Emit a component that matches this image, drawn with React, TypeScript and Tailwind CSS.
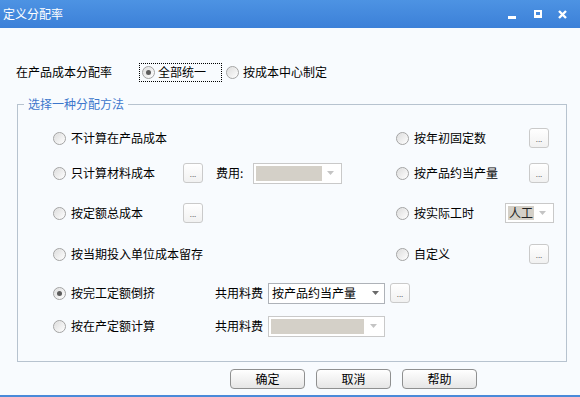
import React from "react";

const Radio = ({ checked }: { checked?: boolean }) => (
  <span className="flex h-[13px] w-[13px] shrink-0 items-center justify-center rounded-full border border-[#a3a3a3] bg-linear-to-br from-[#dcdcdc] to-white shadow-[inset_0_0_1px_#fff]">
    {checked && <span className="h-[5px] w-[5px] rounded-full bg-[#5c5c5c]" />}
  </span>
);

const Arrow = ({ light }: { light?: boolean }) => (
  <svg width="7" height="4" viewBox="0 0 7 4">
    <path d="M0 0H7L3.5 4Z" fill={light ? "#c4c4c4" : "#6a6a6a"} />
  </svg>
);

const Dots = () => (
  <span className="flex h-[20px] w-[20px] shrink-0 items-end justify-center rounded-[3px] border border-[#cacaca] bg-linear-to-b from-white to-[#f1f1f1] pb-[4px] text-[8px] leading-none text-[#666]">
    ...
  </span>
);

const Opt = ({ w, label, checked }: { w: string; label: string; checked?: boolean }) => (
  <span className={`flex shrink-0 items-center gap-[5px] ${w}`}>
    <Radio checked={checked} />
    <span>{label}</span>
  </span>
);

const DisabledSelect = ({ w, arrowW }: { w: string; arrowW: string }) => (
  <span className={`flex h-[21px] shrink-0 border border-[#c9c9c9] bg-white p-[2px] ${w}`}>
    <span className="flex-1 bg-[#d4d0c8]" />
    <span className={`flex items-center justify-center ${arrowW}`}>
      <Arrow light />
    </span>
  </span>
);

const Btn = ({ label }: { label: string }) => (
  <span className="flex h-[20px] w-[75px] items-center justify-center rounded-[4px] border border-[#8f9090] bg-linear-to-b from-white to-[#e6e6e6] text-[12px] text-black">
    {label}
  </span>
);

export default function App() {
  return (
    <div className="flex h-[397px] w-[580px] flex-col overflow-hidden bg-[#f8fbfe] font-['Noto_Sans_CJK_SC',sans-serif] text-[12px] leading-none text-black">
      {/* title bar */}
      <div className="flex h-[28px] shrink-0 items-center bg-linear-to-b from-[#4d93e3] to-[#3c80d8] pl-[3px] pr-[13px] text-white">
        <span className="text-[12px]">定义分配率</span>
        <div className="ml-auto flex items-center">
          <span className="mt-[6px] h-[3px] w-[8px] bg-white" />
          <span className="ml-[18px] h-[8px] w-[8px] border-[2px] border-b-[3px] border-white" />
          <svg className="ml-[16px]" width="9" height="9" viewBox="0 0 9 9">
            <path d="M1 1L8 8M8 1L1 8" stroke="#fff" strokeWidth="2.4" />
          </svg>
        </div>
      </div>

      {/* top row */}
      <div className="mt-[34px] flex h-[20px] items-center pl-[16px]">
        <span className="w-[123px] shrink-0">在产品成本分配率</span>
        <span className="flex h-[19px] w-[83px] items-center gap-[3px] border border-dotted border-black pl-[2px]">
          <Radio checked />
          <span>全部统一</span>
        </span>
        <span className="ml-[4px] flex items-center gap-[4px]">
          <Radio />
          <span>按成本中心制定</span>
        </span>
      </div>

      {/* group */}
      <fieldset className="ml-[17px] mt-[15px] w-[550px] border border-[#b7c3cf] pb-[24px]">
        <legend className="ml-[6px] px-[4px] leading-[14px] text-[#3d77cc]">选择一种分配方法</legend>

        <div className="mt-[16px] flex h-[22px] items-center">
          <div className="flex w-[378px] items-center pl-[35px]">
            <Opt w="w-[130px]" label="不计算在产品成本" />
          </div>
          <Opt w="w-[133px]" label="按年初固定数" />
          <Dots />
        </div>

        <div className="mt-[13px] flex h-[22px] items-center">
          <div className="flex w-[378px] items-center pl-[35px]">
            <Opt w="w-[130px]" label="只计算材料成本" />
            <Dots />
            <span className="ml-[13px] w-[37px] shrink-0">费用:</span>
            <DisabledSelect w="w-[89px]" arrowW="w-[17px]" />
          </div>
          <Opt w="w-[133px]" label="按产品约当产量" />
          <Dots />
        </div>

        <div className="mt-[18px] flex h-[22px] items-center">
          <div className="flex w-[378px] items-center pl-[35px]">
            <Opt w="w-[130px]" label="按定额总成本" />
            <Dots />
          </div>
          <Opt w="w-[109px]" label="按实际工时" />
          <span className="flex h-[20px] w-[49px] items-center border border-[#c9c9c9] bg-white p-[2px]">
            <span className="flex h-full items-center bg-[#d4d0c8] px-[1px] text-[#222]">人工</span>
            <span className="flex flex-1 items-center justify-center">
              <Arrow light />
            </span>
          </span>
        </div>

        <div className="mt-[19px] flex h-[22px] items-center">
          <div className="flex w-[378px] items-center pl-[35px]">
            <Opt w="w-[200px]" label="按当期投入单位成本留存" />
          </div>
          <Opt w="w-[133px]" label="自定义" />
          <Dots />
        </div>

        <div className="mt-[17px] flex h-[22px] items-center pl-[35px]">
          <Opt w="w-[162px]" label="按完工定额倒挤" checked />
          <span className="w-[53px] shrink-0">共用料费</span>
          <span className="flex h-[21px] w-[117px] items-center border border-[#aeb2b8] bg-white pl-[3px]">
            <span>按产品约当产量</span>
            <span className="ml-auto flex w-[18px] items-center justify-center">
              <Arrow />
            </span>
          </span>
          <span className="ml-[5px]">
            <Dots />
          </span>
        </div>

        <div className="mt-[11px] flex h-[22px] items-center pl-[35px]">
          <Opt w="w-[162px]" label="按在产定额计算" />
          <span className="w-[53px] shrink-0">共用料费</span>
          <DisabledSelect w="w-[117px]" arrowW="w-[18px]" />
        </div>
      </fieldset>

      {/* buttons */}
      <div className="mt-[7px] flex gap-[11px] pl-[230px]">
        <Btn label="确定" />
        <Btn label="取消" />
        <Btn label="帮助" />
      </div>

      <div className="mt-auto h-[2px] bg-[#4a8ad9]" />
    </div>
  );
}
